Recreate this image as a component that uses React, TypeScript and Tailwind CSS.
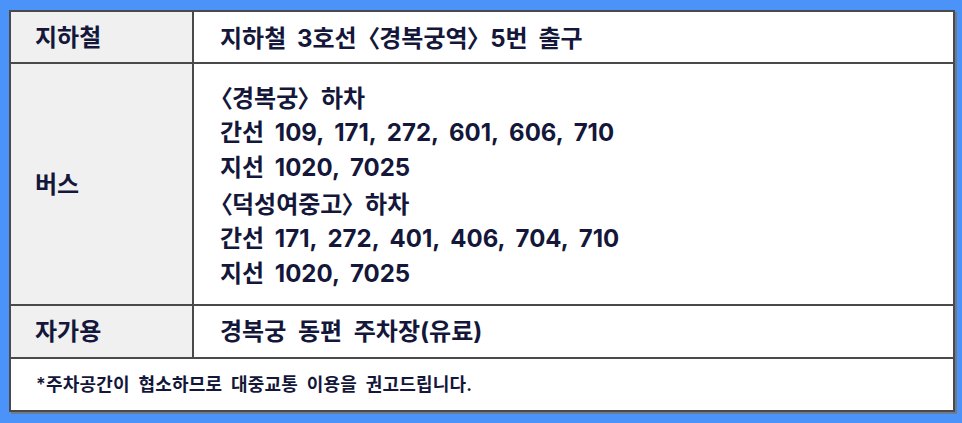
import React from "react";

const font = { fontFamily: '"Inter", "Noto Sans CJK KR", sans-serif' };

function B({ children }: { children: React.ReactNode }) {
  return <span className="[font-feature-settings:'palt']" style={{ fontFamily: '"Noto Sans CJK KR", sans-serif' }}>{children}</span>;
}

export default function App() {
  return (
    <div className="w-[962px] h-[423px] bg-[#4b93f8] pt-[10px] pl-[9px]" style={font}>
      <div className="w-[946px] h-[402px] bg-white border-2 border-[#4a4a4a] shadow-[2px_2px_0_#6b7b90] text-[#14173a] flex flex-col">
        <div className="flex h-[52px] border-b-2 border-[#4a4a4a]">
          <div className="w-[183px] bg-[#f0f0f0] border-r-2 border-[#4a4a4a] flex items-center pl-[24px] pt-[1px] text-[24px] font-bold">지하철</div>
          <div className="flex-1 flex items-center pl-[26px] pt-[1px] text-[24px] font-bold [word-spacing:5px]">
            <span>지하철 3호선 <B>〈</B>경복궁역<B>〉</B> 5번 출구</span>
          </div>
        </div>
        <div className="flex h-[242px] border-b-2 border-[#4a4a4a]">
          <div className="w-[183px] bg-[#f0f0f0] border-r-2 border-[#4a4a4a] flex items-center pl-[24px] pt-[2px] text-[24px] font-bold">버스</div>
          <div className="flex-1 flex flex-col justify-center pl-[26px] pt-[3px] text-[24px] font-bold leading-[34.6px] [word-spacing:5px]">
            <div><B>〈</B>경복궁<B>〉</B> 하차</div>
            <div>간선 109, 171, 272, 601, 606, 710</div>
            <div>지선 1020, 7025</div>
            <div><B>〈</B>덕성여중고<B>〉</B> 하차</div>
            <div>간선 171, 272, 401, 406, 704, 710</div>
            <div>지선 1020, 7025</div>
          </div>
        </div>
        <div className="flex h-[53px] border-b-2 border-[#4a4a4a]">
          <div className="w-[183px] bg-[#f0f0f0] border-r-2 border-[#4a4a4a] flex items-center pl-[24px] pt-[1px] text-[24px] font-bold">자가용</div>
          <div className="flex-1 flex items-center pl-[26px] pt-[1px] text-[24px] font-bold [word-spacing:6px]">경복궁 동편 주차장(유료)</div>
        </div>
        <div className="flex-1 flex items-center pl-[25px] text-[18px] font-semibold [word-spacing:4px] tracking-[0.2px]">*주차공간이 협소하므로 대중교통 이용을 권고드립니다.</div>
      </div>
    </div>
  );
}
